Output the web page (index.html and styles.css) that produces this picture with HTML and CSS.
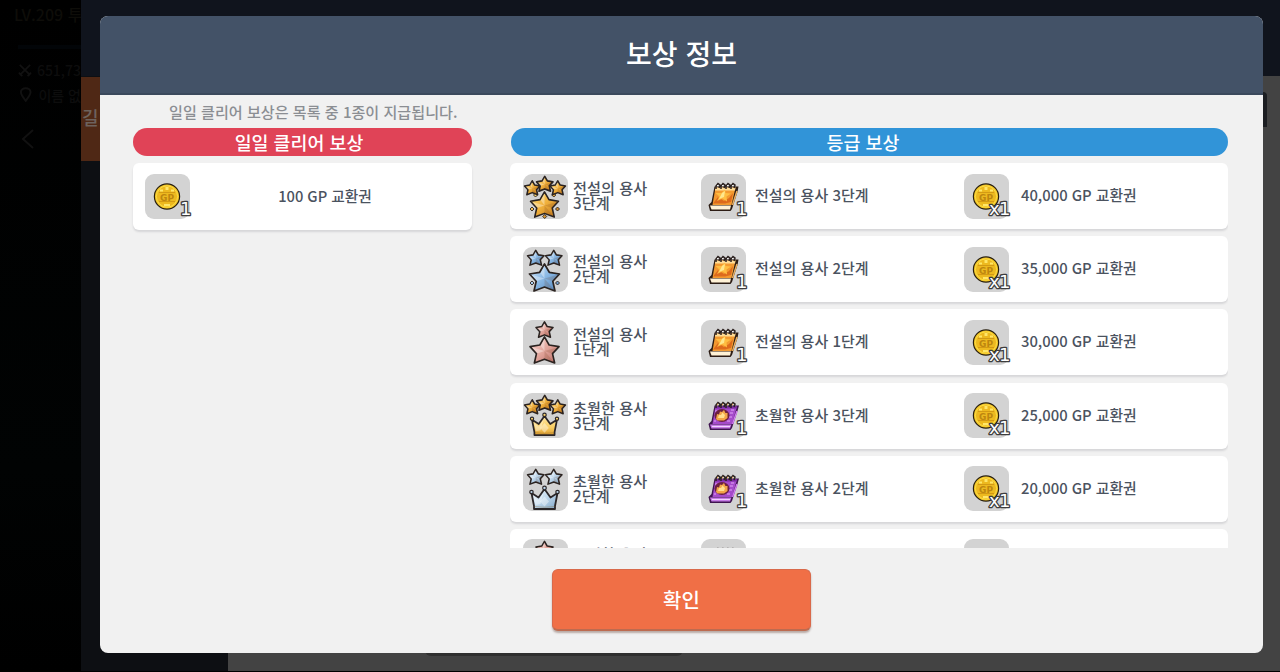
FILE: index.html
```
<!DOCTYPE html>
<html lang="ko">
<head>
  <meta charset="UTF-8">
  <meta name="viewport" content="width=device-width, initial-scale=1.0">
  <title>보상 정보</title>
  <link rel="stylesheet" href="styles.css">
</head>
<body>
  <!-- shared icons -->
  <svg class="defs" width="0" height="0">
    <defs>
      <linearGradient id="gold" x1="0" y1="0" x2="1" y2="1">
        <stop offset="0" stop-color="#ffe07a"/><stop offset=".5" stop-color="#f0b03c"/><stop offset="1" stop-color="#b9701a"/>
      </linearGradient>
      <linearGradient id="goldlight" x1="0" y1="0" x2="0" y2="1">
        <stop offset="0" stop-color="#ffe9a8"/><stop offset=".6" stop-color="#f8cd62"/><stop offset="1" stop-color="#dd9c2c"/>
      </linearGradient>
      <linearGradient id="blue" x1="0" y1="0" x2="1" y2="1">
        <stop offset="0" stop-color="#d3e8fa"/><stop offset=".5" stop-color="#8ab8e4"/><stop offset="1" stop-color="#4f83bb"/>
      </linearGradient>
      <linearGradient id="pink" x1="0" y1="0" x2="1" y2="1">
        <stop offset="0" stop-color="#fbd8d2"/><stop offset=".5" stop-color="#e2a69c"/><stop offset="1" stop-color="#b96c66"/>
      </linearGradient>
      <linearGradient id="silver" x1="0" y1="0" x2="1" y2="1">
        <stop offset="0" stop-color="#f4faff"/><stop offset=".5" stop-color="#c0d8ec"/><stop offset="1" stop-color="#7fa5c8"/>
      </linearGradient>
      <symbol id="star" viewBox="0 0 32 30" overflow="visible">
        <path d="M16 1.500 20.800 9.800 31 11.500 24.300 18.800 26.500 28.500 16 24.500 5.500 28.500 7.700 18.800 1 11.500 11.200 9.800Z" stroke="#2b2320" stroke-linejoin="round"/>
        <path d="M16 3 16 16 12 10.500ZM3 12.200 16 16 8.500 18.500Z" fill="#fff" opacity=".35" stroke="none"/>
        <path d="M16 16 29 12.300 23.500 18.500ZM16 16 25.300 27 16 23.500Z" fill="#6b3510" opacity=".17" stroke="none"/>
      </symbol>
      <symbol id="crown" viewBox="0 0 30 25" overflow="visible">
        <path d="M2 7 9 11.500 15 3 21 11.500 28 7 25.500 20 25.500 23H4.500L4.500 20Z" stroke="#2b2628" stroke-width="1.800" stroke-linejoin="round"/>
        <path d="M4 10 9 14 14 7 11 18 6 19Z" fill="#fff" opacity=".4"/>
        <path d="M15 10.500 19.500 15.500 15 20.500 10.500 15.500Z" fill="#fff" opacity=".4"/>
        <path d="M5 20.500Q15 22 25 20.500" fill="none" stroke="#8b6a34" stroke-opacity=".35"/>
        <g stroke="#2b2628" stroke-width="1.200"><circle cx="2" cy="6" r="1.700"/><circle cx="15" cy="2" r="1.800"/><circle cx="28" cy="6" r="1.700"/></g>
      </symbol>
      <symbol id="legend3" viewBox="0 0 45 45">
        <g fill="url(#gold)">
          <path d="M9 33l2 2-2 2-2-2zM34.500 33l2 2-2 2-2-2zM21.700 40.500l2 2-2 2-2-2zM12.500 19l2 2-2 2-2-2zM30.800 19l2 2-2 2-2-2z" stroke="#2b2320" stroke-width=".9"/>
          <g stroke-width="3"><use href="#star" x="1" y="6" width="16.500" height="15.500"/><use href="#star" x="26.500" y="6" width="16.500" height="15.500"/><use href="#star" x="13" y="1.500" width="17.500" height="16.500"/></g>
          <use href="#star" x="5.500" y="16.500" width="32" height="28" stroke-width="1.700"/>
        </g>
      </symbol>
      <symbol id="legend2" viewBox="0 0 45 45">
        <g fill="url(#blue)">
          <path d="M9 34l2 2-2 2-2-2zM34.500 34l2 2-2 2-2-2z" stroke="#2b2320" stroke-width=".9"/>
          <g stroke-width="2.900"><use href="#star" x="4" y="2.500" width="17.500" height="16.500"/><use href="#star" x="22" y="2.500" width="17.500" height="16.500"/></g>
          <use href="#star" x="4.500" y="15.500" width="34" height="30" stroke-width="1.700"/>
        </g>
      </symbol>
      <symbol id="legend1" viewBox="0 0 45 45">
        <g fill="url(#pink)">
          <use href="#star" x="11.500" y="1" width="20" height="17" stroke-width="2.800"/>
          <use href="#star" x="5" y="15.500" width="33" height="29" stroke-width="1.700"/>
        </g>
      </symbol>
      <symbol id="trans3" viewBox="0 0 45 45">
        <g fill="url(#gold)" stroke-width="3"><use href="#star" x="1" y="6" width="16.500" height="15.500"/><use href="#star" x="26.500" y="6" width="16.500" height="15.500"/><use href="#star" x="13" y="1.500" width="17.500" height="16.500"/></g>
        <g fill="url(#goldlight)"><use href="#crown" x="6" y="20" width="31" height="24"/></g>
      </symbol>
      <symbol id="trans2" viewBox="0 0 45 45">
        <g fill="url(#silver)">
          <g stroke-width="2.900"><use href="#star" x="4" y="2.500" width="17.500" height="16.500"/><use href="#star" x="22" y="2.500" width="17.500" height="16.500"/></g>
          <use href="#crown" x="6" y="20" width="31" height="25"/>
        </g>
      </symbol>
      <symbol id="trans1" viewBox="0 0 45 45">
        <g fill="url(#pink)">
          <use href="#star" x="11.500" y="1.500" width="20" height="17" stroke-width="2.800"/>
          <use href="#crown" x="6" y="20" width="31" height="25"/>
        </g>
      </symbol>
      <symbol id="rings" viewBox="0 0 45 45">
        <path d="M15 15v-3l2-2.500 2 1.500-1 3M20 15v-3l2-2.500 2 1.500-1 3M25 15v-3l2-2.500 2 1.500-1 3M30 15v-3l2-2.500 2 1.500-1 3" fill="none" stroke="#2c2220" stroke-width="1.500"/>
      </symbol>
      <symbol id="book-orange" viewBox="0 0 45 45">
        <path d="M13.500 12.500H37.500L36.500 18 31 35 29.500 37H9L7.500 31 10.500 28Z" fill="#2c1c14"/>
        <path d="M14.500 13.500H34.500L30.500 31H11.500Z" fill="#f39a30"/>
        <path d="M14.500 13.500H34.500L34 16.500H14Z" fill="#ffdc96"/>
        <path d="M12 20 17 23 12 29.500H24L30 28 32 19 28 24 23 27Z" fill="#dd6a1c"/>
        <path d="M24 15.500 24.500 19 30 19.500 25.500 22.500 26 27.500 21.500 24.500 16 27 18.500 22.500 14.500 19 20.500 19Z" fill="#ffbe42"/>
        <path d="M21 19 24 17 23 23 18 25Z" fill="#ffe78d"/>
        <path d="M9 31.500H30L29 35.500H10.500Z" fill="#fff2d6"/>
        <path d="M31.500 31 36 17" stroke="#e9b064" stroke-width="1.500" fill="none"/>
        <use href="#rings" width="45" height="45"/>
        <path d="M16 11.500h1M21 11.500h1M26 11.500h1M31 11.500h1" stroke="#eee"/>
      </symbol>
      <symbol id="book-purple" viewBox="0 0 45 45">
        <path d="M13.500 12.500H38L36.500 18 31 35 29.500 37H9L7.500 31 10.500 28Z" fill="#3f1450"/>
        <path d="M14.500 13.500H36L31 31H11.500Z" fill="#a54bcb"/>
        <path d="M14.500 13.500H36L35.500 15.500H14Z" fill="#7b2ba4"/>
        <path d="M30 17h3M29 20h3M28 24h3M26 28h3M14 18h2M13 28h2" stroke="#cf86ea" stroke-width="1.500"/>
        <ellipse cx="21" cy="22.500" rx="7.500" ry="6.500" fill="#6d2140"/>
        <path d="M15 26 16 21 18 21.500 19 18.500 21 19 23 17 24.500 20 26.500 20 26.500 25 23 27.500H16.500Z" fill="#f3a548"/>
        <path d="M17 25 18 22 20 22 21.500 19.500 24 22 23 25Z" fill="#ffdf90"/>
        <path d="M9 31.500H30.500L29 35.500H10.500Z" fill="#c67be6"/>
        <path d="M11 33.500H29" stroke="#f1d2ff"/>
        <path d="M31.500 31 36 18" stroke="#d17af0" stroke-width="1.500" fill="none"/>
        <use href="#rings" width="45" height="45"/>
        <path d="M16 11.500h1M21 11.500h1M26 11.500h1M31 11.500h1" stroke="#edb064" stroke-width="1.400"/>
      </symbol>
      <symbol id="coin" viewBox="0 0 45 45">
        <circle cx="22" cy="22.500" r="12.600" fill="#f5c726" stroke="#292010" stroke-width="1.200"/>
        <circle cx="22" cy="22.500" r="10.600" fill="#edb91f" stroke="#fbdc46"/>
        <path d="M20.500 13h3v3h-3zM15 15.500h3v2h-3zM26 15.500h3v2h-3zM19 30h6v2h-6z" fill="#ffe668"/>
        <path d="M14 18.500H30M14 27.500H30" stroke="#d39a14"/>
        <text class="gp" x="22" y="26.500" text-anchor="middle">GP</text>
      </symbol>
    </defs>
  </svg>

  <div class="app">
    <aside class="side">
      <div class="side-level">LV.209 투</div>
      <div class="side-bar"></div>
      <div class="side-line">
        <svg width="16" height="16" viewBox="0 0 16 16"><path d="M2 2 14 14M14 2 2 14M1 11 5 15M11 15 15 11"/></svg>
        651,73
      </div>
      <div class="side-line">
        <svg width="16" height="16" viewBox="0 0 16 16"><path d="M8 14Q3 8 3 5a5 4 0 0 1 10 0Q13 8 8 14Z"/></svg>
        이름 없
      </div>
      <svg class="side-back" width="16" height="24" viewBox="0 0 16 24"><path d="M13 3 3 12 13 21"/></svg>
    </aside>
    <div class="topbar"></div>
    <nav class="menu">
      <div class="menu-tab">길</div>
    </nav>
    <main class="page">
      <div class="page-handle"></div>
      <div class="page-btn"></div>
    </main>
  </div>

  <div class="modal">
    <header class="modal-header">보상 정보</header>
    <div class="modal-body">
      <section class="daily">
        <p class="note">일일 클리어 보상은 목록 중 1종이 지급됩니다.</p>
        <h2 class="badge red">일일 클리어 보상</h2>
        <div class="card daily-card">
          <svg class="icon" viewBox="0 0 45 45"><use href="#coin"/><text class="count" x="46" y="41">1</text></svg>
          <span class="daily-name">100 GP 교환권</span>
        </div>
      </section>

      <section class="grade">
        <h2 class="badge blue">등급 보상</h2>
        <div class="list">
          <div class="card row">
            <svg class="icon" viewBox="0 0 45 45"><use href="#legend3"/></svg>
            <span class="rank">전설의 용사<br>3단계</span>
            <svg class="icon" viewBox="0 0 45 45"><use href="#book-orange"/><text class="count" x="46" y="41">1</text></svg>
            <span class="item">전설의 용사 3단계</span>
            <svg class="icon" viewBox="0 0 45 45"><use href="#coin"/><text class="count" x="46" y="41">x1</text></svg>
            <span class="point">40,000 GP 교환권</span>
          </div>
          <div class="card row">
            <svg class="icon" viewBox="0 0 45 45"><use href="#legend2"/></svg>
            <span class="rank">전설의 용사<br>2단계</span>
            <svg class="icon" viewBox="0 0 45 45"><use href="#book-orange"/><text class="count" x="46" y="41">1</text></svg>
            <span class="item">전설의 용사 2단계</span>
            <svg class="icon" viewBox="0 0 45 45"><use href="#coin"/><text class="count" x="46" y="41">x1</text></svg>
            <span class="point">35,000 GP 교환권</span>
          </div>
          <div class="card row">
            <svg class="icon" viewBox="0 0 45 45"><use href="#legend1"/></svg>
            <span class="rank">전설의 용사<br>1단계</span>
            <svg class="icon" viewBox="0 0 45 45"><use href="#book-orange"/><text class="count" x="46" y="41">1</text></svg>
            <span class="item">전설의 용사 1단계</span>
            <svg class="icon" viewBox="0 0 45 45"><use href="#coin"/><text class="count" x="46" y="41">x1</text></svg>
            <span class="point">30,000 GP 교환권</span>
          </div>
          <div class="card row">
            <svg class="icon" viewBox="0 0 45 45"><use href="#trans3"/></svg>
            <span class="rank">초월한 용사<br>3단계</span>
            <svg class="icon" viewBox="0 0 45 45"><use href="#book-purple"/><text class="count" x="46" y="41">1</text></svg>
            <span class="item">초월한 용사 3단계</span>
            <svg class="icon" viewBox="0 0 45 45"><use href="#coin"/><text class="count" x="46" y="41">x1</text></svg>
            <span class="point">25,000 GP 교환권</span>
          </div>
          <div class="card row">
            <svg class="icon" viewBox="0 0 45 45"><use href="#trans2"/></svg>
            <span class="rank">초월한 용사<br>2단계</span>
            <svg class="icon" viewBox="0 0 45 45"><use href="#book-purple"/><text class="count" x="46" y="41">1</text></svg>
            <span class="item">초월한 용사 2단계</span>
            <svg class="icon" viewBox="0 0 45 45"><use href="#coin"/><text class="count" x="46" y="41">x1</text></svg>
            <span class="point">20,000 GP 교환권</span>
          </div>
          <div class="card row">
            <svg class="icon" viewBox="0 0 45 45"><use href="#trans1"/></svg>
            <span class="rank">초월한 용사<br>1단계</span>
            <svg class="icon" viewBox="0 0 45 45"><use href="#book-purple"/></svg>
            <span class="item"></span>
            <svg class="icon" viewBox="0 0 45 45"><use href="#coin"/></svg>
            <span class="point"></span>
          </div>
        </div>
      </section>
    </div>
    <button class="confirm">확인</button>
  </div>
</body>
</html>
```
FILE: styles.css
```
* {
  box-sizing: border-box;
}
body {
  margin: 0;
  width: 1280px;
  height: 672px;
  overflow: hidden;
  background: #000;
  font-family: "Noto Sans CJK KR", sans-serif;
  font-weight: 500;
}
.defs {
  position: absolute;
}

/* dimmed page behind the dialog */
.app {
  display: grid;
  grid-template-columns: 81px 147px 1fr;
  grid-template-rows: 76px 1fr;
  height: 671px;
}
.side {
  grid-row: 1 / 3;
  padding: 3px 0 0 14px;
  overflow: hidden;
  white-space: nowrap;
  background: linear-gradient(#000, #010303 70%, #000);
  color: #0d0d0d;
  font-size: 14px;
}
.side-level {
  font-size: 16px;
  line-height: 22px;
  color: #0e0d09;
}
.side-bar {
  height: 4px;
  margin: 20px 0 8px 4px;
  background: #020508;
}
.side-line {
  display: flex;
  align-items: center;
  gap: 5px;
  height: 25px;
  padding-left: 4px;
}
.side svg {
  fill: none;
  stroke: #111;
  stroke-width: 2;
}
.side-back {
  display: block;
  margin: 20px 0 0 6px;
}
.topbar {
  grid-column: 2 / 4;
  background: #10141d;
}
.menu {
  background: #0d0f13;
}
.menu-tab {
  height: 84px;
  margin-top: 1px;
  padding-left: 1px;
  background: #4f2815;
  color: #6d625d;
  font-size: 18px;
  line-height: 80px;
}
.page {
  display: flex;
  flex-direction: column;
  justify-content: space-between;
  padding: 16px 13px 15px 197px;
  background: #434343;
}
.page-handle {
  align-self: flex-end;
  width: 8px;
  height: 35px;
  border-radius: 4px 4px 0 0;
  background: #1c1e22;
}
.page-btn {
  width: 258px;
  height: 40px;
  border-radius: 6px;
  background: #303030;
}

/* dialog */
.modal {
  position: absolute;
  left: 100px;
  top: 16px;
  width: 1163px;
  height: 637px;
  display: flex;
  flex-direction: column;
  border-radius: 8px;
  overflow: hidden;
  background: #f1f1f1;
  color: #4b535f;
}
.modal-header {
  height: 79px;
  border-bottom: 2px solid #3b495c;
  background: #435267;
  color: #fff;
  font-size: 28px;
  line-height: 75px;
  text-align: center;
}
.modal-body {
  display: flex;
  gap: 38px;
  height: 453px;
  padding: 0 35px 0 33px;
}
.daily {
  width: 339px;
}
.note {
  height: 33px;
  margin: 0;
  padding-left: 36px;
  color: #8b8e93;
  font-size: 15.1px;
  line-height: 32px;
  white-space: nowrap;
}
.grade {
  display: flex;
  flex-direction: column;
  width: 718px;
  padding-top: 33px;
}
.badge {
  flex: none;
  height: 28px;
  margin: 0 0 7px;
  border-radius: 14px;
  color: #fff;
  font-size: 18.4px;
  font-weight: 500;
  line-height: 28px;
  text-align: center;
}
.red {
  background: #e04357;
  padding-right: 7px;
}
.blue {
  margin-left: 1px;
  background: #3194d8;
  padding-right: 13px;
}
.card {
  display: flex;
  align-items: center;
  height: 66px;
  padding: 0 12px 0 13px;
  border-radius: 6px;
  background: #fff;
  box-shadow: 0 2px 2px #d6d6d8;
  font-size: 15.2px;
  white-space: nowrap;
}
.daily-card {
  height: 67px;
  padding-left: 12px;
}
.daily-name {
  flex: 1;
  padding-bottom: 3px;
  font-size: 14.7px;
  text-align: center;
}
.list {
  display: flex;
  flex-direction: column;
  gap: 7.2px;
  flex: 1;
  min-height: 0;
  overflow: hidden;
}
.row {
  flex: none;
  display: grid;
  grid-template-columns: 45px 133px 45px 218px 45px 1fr;
}
.icon {
  display: block;
  width: 45px;
  height: 45px;
  border-radius: 9px;
  background: #d3d3d3;
  overflow: visible;
}
.rank {
  padding: 0 0 2px 5px;
  line-height: 15px;
}
.item {
  padding: 0 0 3px 9px;
  font-size: 15px;
}
.point {
  padding: 0 0 3px 12px;
  font-size: 14.8px;
}
.count {
  font-family: "DejaVu Sans", sans-serif;
  font-size: 18px;
  letter-spacing: -0.5px;
  text-anchor: end;
  fill: #fff;
  stroke: #3d3d3d;
  stroke-width: 2.6px;
  stroke-linejoin: round;
  paint-order: stroke;
}
.gp {
  font-family: "DejaVu Sans", sans-serif;
  font-size: 9px;
  font-weight: bold;
  fill: #bd860f;
}
.confirm {
  align-self: center;
  width: 259px;
  height: 62px;
  margin-top: 21px;
  border: 1px solid #d9694a;
  border-bottom: 2px solid #bd6b50;
  border-radius: 6px;
  background: #f06f46;
  box-shadow: 0 2px 2px #b9aaa5;
  color: #fff;
  font-family: inherit;
  font-size: 20px;
  font-weight: 500;
}
```
